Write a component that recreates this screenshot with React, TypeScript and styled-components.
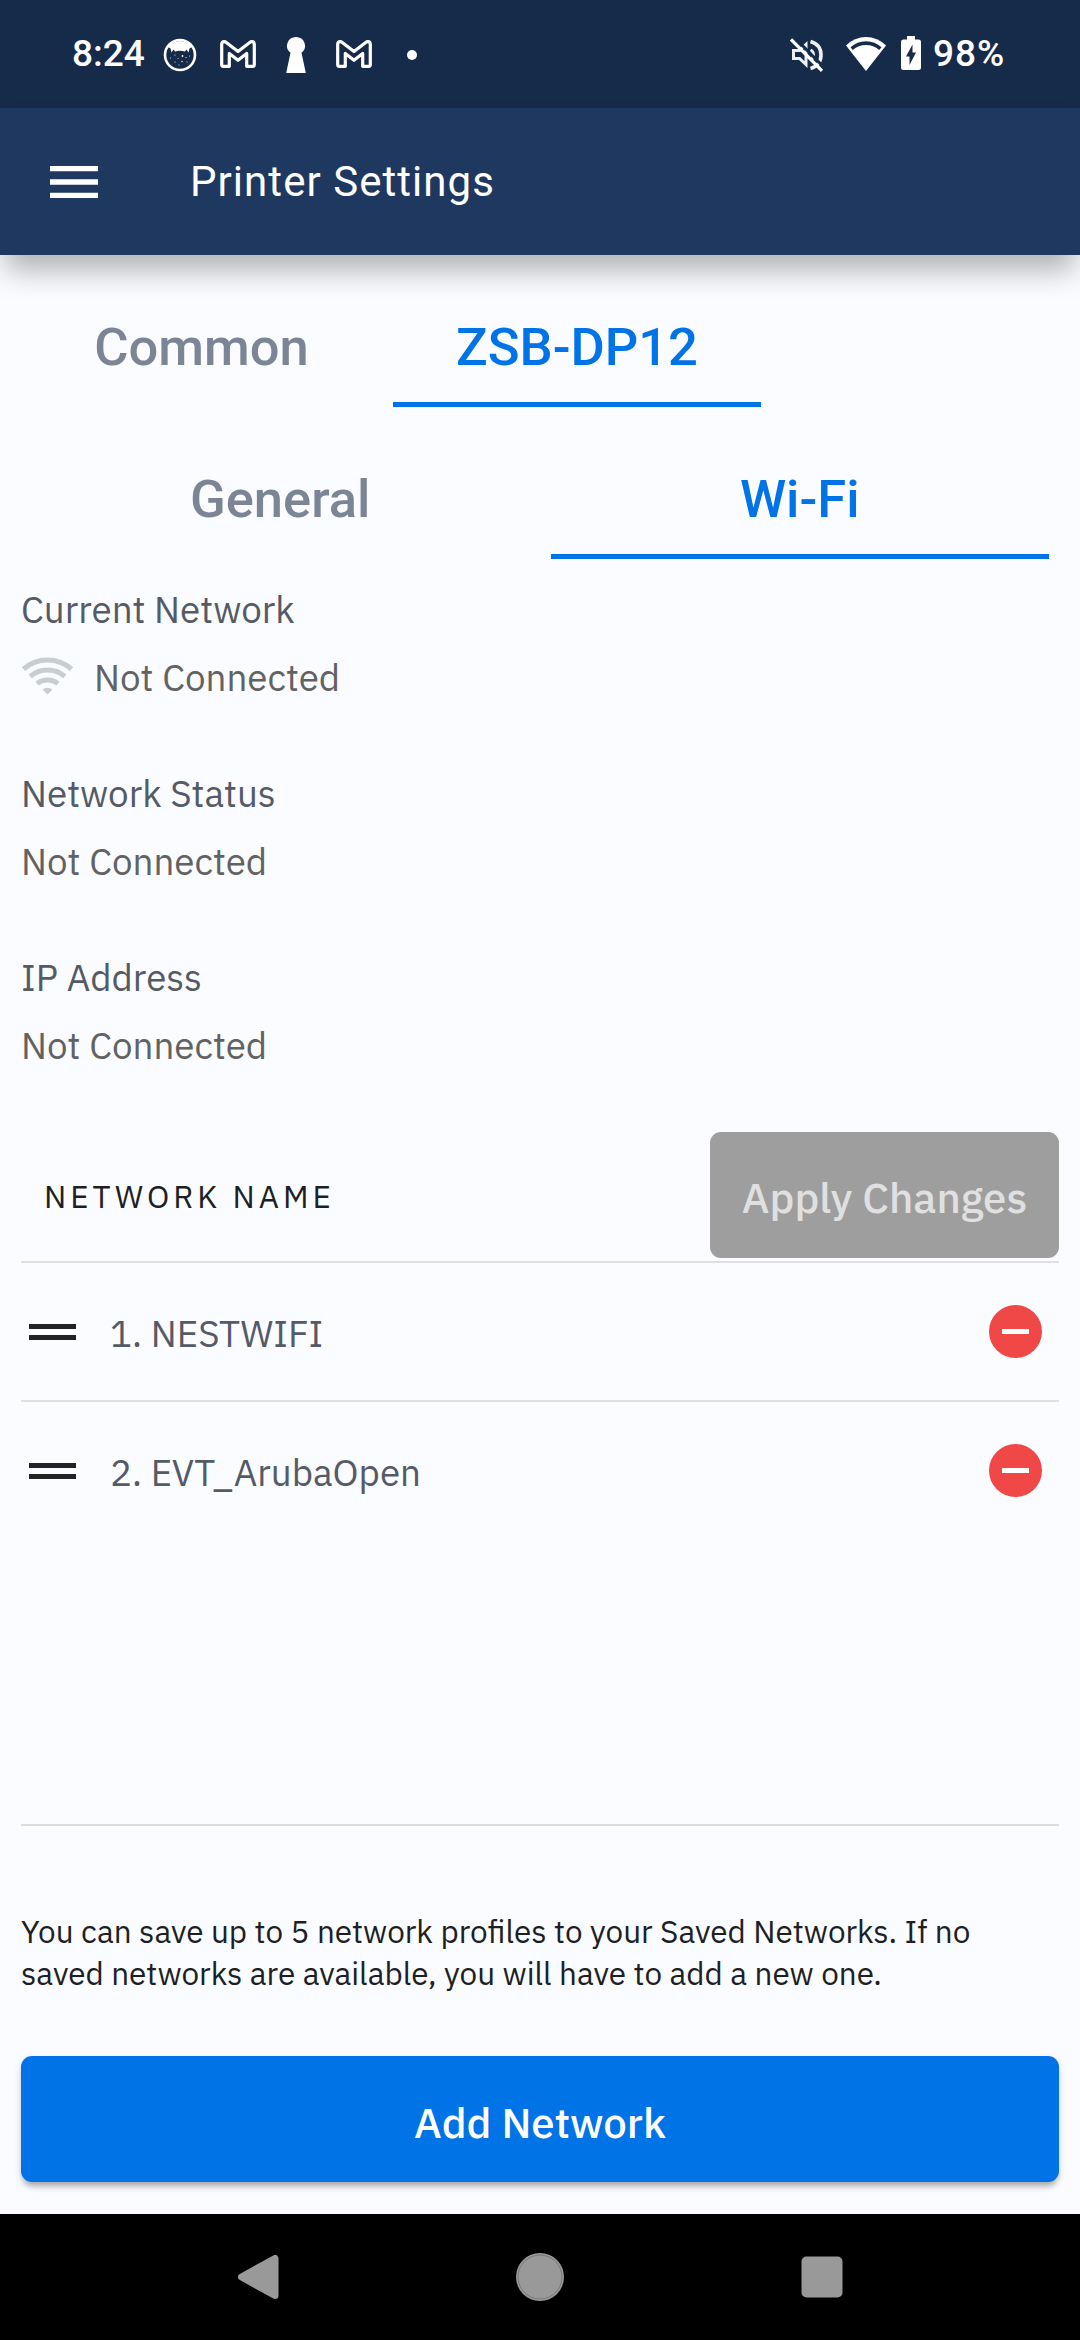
import React from "react";
import styled, { createGlobalStyle } from "styled-components";

const Global = createGlobalStyle`
  *, *::before, *::after { box-sizing: border-box; }
  body { margin: 0; background: #fbfcff; }
  button { border: 0; padding: 0; margin: 0; background: none; font: inherit; }
  svg { display: block; flex: none; }
`;

const body = `"IBM Plex Sans", Roboto, "Noto Sans", sans-serif`;

const Screen = styled.div`
  width: 1080px;
  height: 2340px;
  display: flex;
  flex-direction: column;
  background: #fbfcff;
  font-family: Roboto, sans-serif;
  overflow: hidden;
`;

const StatusBar = styled.header`
  flex: none;
  height: 108px;
  padding: 0 76px 0 72px;
  display: flex;
  justify-content: space-between;
  align-items: center;
  background: #162a49;
  color: #fff;
`;

const StatusGroup = styled.div`
  display: flex;
  align-items: center;
  height: 40px;
`;

const StatusText = styled.span<{ $width: number; $left?: number; $spacing?: number }>`
  width: ${(p) => p.$width}px;
  margin-left: ${(p) => p.$left ?? 0}px;
  font: 500 37px/40px Roboto, sans-serif;
  letter-spacing: ${(p) => p.$spacing ?? 0}px;
  white-space: nowrap;
`;

const StatusIcon = styled.svg<{ $left: number; $drop?: number }>`
  margin-left: ${(p) => p.$left}px;
  margin-top: ${(p) => (p.$drop ?? 0) * 2}px;
`;

const AppBar = styled.div`
  flex: none;
  height: 147px;
  display: flex;
  align-items: center;
  padding-left: 42px;
  gap: 84px;
  background: #1e3860;
  color: #fff;
  box-shadow: 0 20px 28px -5px rgba(0, 0, 0, 0.3);
`;

const Title = styled.h1`
  margin: 0;
  font: 400 42px/50px Roboto, sans-serif;
  letter-spacing: 1.05px;
`;

const Tabs = styled.nav<{ $columns: string }>`
  flex: none;
  height: 152px;
  display: grid;
  grid-template-columns: ${(p) => p.$columns};
  column-gap: 21px;
  padding: 0 31px;
`;

const Tab = styled.button<{ $active?: boolean }>`
  padding: 62px 0 25px;
  font: 500 52.5px/60px Roboto, sans-serif;
  text-align: center;
  color: ${(p) => (p.$active ? "#0073e6" : "#7c8595")};
  border-bottom: 5px solid ${(p) => (p.$active ? "#0073e6" : "transparent")};
`;

const Info = styled.section`
  flex: none;
  display: flex;
  flex-direction: column;
  gap: 48px;
  padding: 16px 21px 53px;
  font-family: ${body};
  font-size: 36.75px;
  line-height: 68px;
`;

const Label = styled.div`
  color: #545a66;
`;

const Value = styled.div`
  display: flex;
  align-items: center;
  gap: 20px;
  color: #626262;
`;

const WifiIcon = styled.svg`
  margin-bottom: 2px;
`;

const ListHeader = styled.div`
  flex: none;
  height: 129px;
  margin: 0 21px;
  display: flex;
  justify-content: space-between;
  align-items: flex-start;
`;

const ColumnTitle = styled.h2`
  margin: 0;
  padding: 45px 0 0 23px;
  font: 400 31.5px/40px ${body};
  letter-spacing: 3.94px;
  color: #1d1f24;
`;

const ApplyButton = styled.button`
  width: 349px;
  height: 126px;
  padding-top: 5px;
  border-radius: 11px;
  background: #9e9e9e;
  color: #e0e0e0;
  font: 500 42px/50px ${body};
`;

const List = styled.ul`
  flex: none;
  height: 565px;
  margin: 0 21px;
  padding: 0;
  list-style: none;
  border-bottom: 2px solid #dcdde0;
`;

const Row = styled.li`
  height: 139px;
  display: flex;
  align-items: center;
  padding: 0 17px 0 8px;
  border-top: 2px solid #dfe0e3;
`;

const Handle = styled.span`
  width: 47px;
  height: 16px;
  border: solid #222423;
  border-width: 5px 0;
`;

const NetworkName = styled.span`
  flex: 1;
  padding: 3px 0 0 34px;
  font: 400 36.75px/50px ${body};
  color: #545a66;
`;

const Remove = styled.button`
  width: 53px;
  height: 53px;
  border-radius: 50%;
  background: #f04747;
  display: grid;
  place-items: center;
  &::before {
    content: "";
    width: 27px;
    height: 5px;
    background: #fff;
  }
`;

const Note = styled.p`
  flex: none;
  margin: 0;
  padding: 85px 21px 61px;
  font: 400 31.5px/42px ${body};
  color: #1d1f24;
`;

const AddButton = styled.button`
  flex: none;
  height: 126px;
  margin: 0 21px 32px;
  padding-top: 8px;
  border-radius: 11px;
  background: #0073e6;
  color: #fff;
  font: 500 42px/50px ${body};
  box-shadow: 0 6px 6px -2px rgba(0, 0, 0, 0.28), 0 3px 8px rgba(0, 0, 0, 0.1);
`;

const NavBar = styled.footer`
  flex: none;
  height: 126px;
  display: flex;
  align-items: center;
  justify-content: center;
  gap: 234px;
  background: #000;
`;

const Github = () => (
  <StatusIcon $left={14} $drop={1} width="34" height="34" viewBox="0 0 34 34">
    <circle cx="17" cy="17" r="15" fill="#162a49" stroke="#fff" strokeWidth="2.6" />
    <path d="M5 9A15 15 0 0 1 29 9L26.500 10.500 25.500 14.500 23.500 11.500 22 13.500Q17 12 12 13.500L10.500 11.500 8.500 14.500 7.500 10.500Z" fill="#fff" />
    <g fill="#fff">
      <circle cx="12" cy="17" r=".6" />
      <circle cx="19.500" cy="18" r=".9" />
      <circle cx="15" cy="20.500" r=".5" />
      <circle cx="23" cy="19.500" r=".6" />
      <circle cx="7.500" cy="20" r=".5" />
      <circle cx="19" cy="23.500" r=".7" />
      <circle cx="12" cy="24" r=".6" />
      <circle cx="26.500" cy="18" r=".5" />
      <circle cx="24" cy="24" r=".5" />
      <circle cx="16" cy="27" r=".5" />
    </g>
  </StatusIcon>
);

const Gmail = ({ left }: { left: number }) => (
  <StatusIcon $left={left} width="36" height="28" viewBox="0 0 36 28">
    <path
      d="M1.700 4.400Q1.700 1.700 4.200 1.700 5.300 1.700 6.300 2.500L18 11.600 29.700 2.500Q30.700 1.700 31.800 1.700 34.300 1.700 34.300 4.400V24.800Q34.300 26.300 32.800 26.300H26.700V13.400L18 20.300 9.300 13.400V26.300H3.200Q1.700 26.300 1.700 24.800Z"
      fill="none"
      stroke="#fff"
      strokeWidth="3.200"
      strokeLinejoin="round"
    />
  </StatusIcon>
);

export default function App() {
  return (
    <Screen>
      <Global />
      <StatusBar>
        <StatusGroup>
          <StatusText $width={77}>8:24</StatusText>
          <Github />
          <Gmail left={23} />
          <StatusIcon $left={30} $drop={1} width="20" height="36" viewBox="0 0 20 37" preserveAspectRatio="none">
            <path d="M10 0a9 9 0 0 1 5.500 16.100L19.800 37H.2L4.500 16.100A9 9 0 0 1 10 0Z" fill="#fff" />
          </StatusIcon>
          <Gmail left={30} />
          <StatusIcon $left={35} $drop={1} width="10" height="10" viewBox="0 0 10 10">
            <circle cx="5" cy="5" r="5" fill="#fff" />
          </StatusIcon>
        </StatusGroup>
        <StatusGroup>
          <StatusIcon $left={0} $drop={1} width="34" height="34" viewBox="0 0 34 34" fill="none" stroke="#eceff3" strokeWidth="3">
            <path d="M3.500 12.500H9.500L16 6.500V26.500L9.500 20.500H3.500Z" />
            <path d="M20.500 12Q23.500 13.500 23.500 17 23.500 20.500 20.500 22" />
            <path d="M20.500 3.500Q31 6.500 31 17 31 27.500 20.500 30.500" strokeWidth="3.600" />
            <path d="M4 -1L36 31.500" stroke="#162a49" strokeWidth="3" />
            <path d="M1 1.500L32 32.800" stroke="#fff" strokeWidth="3.200" />
          </StatusIcon>
          <StatusIcon $left={22} width="40" height="34" viewBox="0 0 40 34">
            <path d="M0 8.500Q8.500 0 20 0T40 8.500L20 34Z" fill="#fff" />
            <path d="M4.500 10.200Q11 4.200 20 4.200T35.500 10.200L33.200 13Q27.500 8 20 8T6.800 13Z" fill="#162a49" />
          </StatusIcon>
          <StatusIcon $left={15} $drop={-1} width="20" height="34" viewBox="0 0 20 34">
            <path d="M6 0h8v3.500h3.500a2.500 2.500 0 0 1 2.500 2.500v25.500a2.500 2.500 0 0 1-2.500 2.500h-15A2.500 2.500 0 0 1 0 31.500V6a2.500 2.500 0 0 1 2.500-2.500H6Z" fill="#fff" />
            <path d="M11.500 8.500V16.500H15L8.500 29V20.500H5Z" fill="#162a49" />
          </StatusIcon>
          <StatusText $width={71} $left={12} $spacing={1}>
            98%
          </StatusText>
        </StatusGroup>
      </StatusBar>

      <AppBar>
        <svg width="64" height="64" viewBox="0 0 24 24" fill="#fff">
          <path d="M3 18h18v-2H3v2zm0-5h18v-2H3v2zm0-7v2h18V6H3z" />
        </svg>
        <Title>Printer Settings</Title>
      </AppBar>

      <Tabs $columns="341px 368px">
        <Tab>Common</Tab>
        <Tab $active>ZSB-DP12</Tab>
      </Tabs>
      <Tabs $columns="1fr 1fr">
        <Tab>General</Tab>
        <Tab $active>Wi-Fi</Tab>
      </Tabs>

      <Info>
        <div>
          <Label>Current Network</Label>
          <Value>
            <WifiIcon width="53" height="38" viewBox="0 0 53 38" fill="none" stroke="#c8cdd4" strokeWidth="5">
              <path d="M2.500 12.200Q12.500 3 26.500 3T50.500 12.200" />
              <path d="M9.200 19.400Q16.500 13 26.500 13T43.800 19.400" />
              <path d="M16 26.600Q20.500 23 26.500 23T37 26.600" />
              <path d="M21.500 32.500Q26.500 29 31.500 32.500L26.500 37.500Z" fill="#c8cdd4" stroke="none" />
            </WifiIcon>
            Not Connected
          </Value>
        </div>
        <div>
          <Label>Network Status</Label>
          <Value>Not Connected</Value>
        </div>
        <div>
          <Label>IP Address</Label>
          <Value>Not Connected</Value>
        </div>
      </Info>

      <ListHeader>
        <ColumnTitle>NETWORK NAME</ColumnTitle>
        <ApplyButton>Apply Changes</ApplyButton>
      </ListHeader>
      <List>
        <Row>
          <Handle />
          <NetworkName>1. NESTWIFI</NetworkName>
          <Remove aria-label="Remove NESTWIFI" />
        </Row>
        <Row>
          <Handle />
          <NetworkName>2. EVT_ArubaOpen</NetworkName>
          <Remove aria-label="Remove EVT_ArubaOpen" />
        </Row>
      </List>
      <Note>
        You can save up to 5 network profiles to your Saved Networks. If no
        <br />
        saved networks are available, you will have to add a new one.
      </Note>
      <AddButton>Add Network</AddButton>

      <NavBar>
        <svg width="48" height="48" viewBox="0 0 48 48">
          <path d="M7.500 24L41 5.500V42.500Z" fill="#999" stroke="#999" strokeWidth="7" strokeLinejoin="round" />
        </svg>
        <svg width="48" height="48" viewBox="0 0 48 48">
          <circle cx="24" cy="24" r="24" fill="#999" />
          <circle cx="24" cy="24" r="22" fill="none" stroke="#6f6f6f" strokeWidth=".8" />
        </svg>
        <svg width="48" height="48" viewBox="0 0 48 48">
          <rect x="3.500" y="3.500" width="41" height="41" rx="5" fill="#999" />
        </svg>
      </NavBar>
    </Screen>
  );
}
